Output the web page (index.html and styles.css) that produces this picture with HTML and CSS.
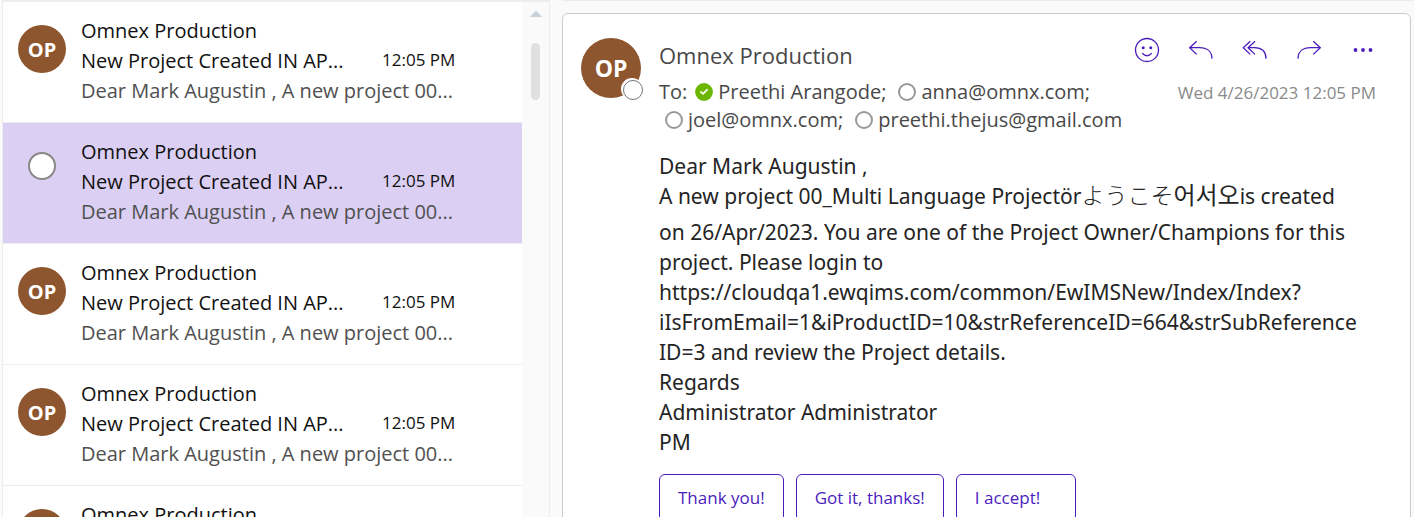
FILE: index.html
```html
<!DOCTYPE html>
<html lang="en">
<head>
<meta charset="utf-8">
<title>Mail</title>
<link rel="stylesheet" href="styles.css">
</head>
<body>
<main class="app">
  <section class="list-pane" aria-label="Messages">
    <ul class="messages">
      <li class="message">
        <span class="avatar">OP</span>
        <div class="summary">
          <span class="sender">Omnex Production</span>
          <span class="subject">New Project Created IN AP...</span><time class="time">12:05 PM</time>
          <span class="preview">Dear Mark Augustin , A new project 00...</span>
        </div>
      </li>
      <li class="message selected">
        <input class="pick" type="checkbox" aria-label="Select message">
        <div class="summary">
          <span class="sender">Omnex Production</span>
          <span class="subject">New Project Created IN AP...</span><time class="time">12:05 PM</time>
          <span class="preview">Dear Mark Augustin , A new project 00...</span>
        </div>
      </li>
      <li class="message">
        <span class="avatar">OP</span>
        <div class="summary">
          <span class="sender">Omnex Production</span>
          <span class="subject">New Project Created IN AP...</span><time class="time">12:05 PM</time>
          <span class="preview">Dear Mark Augustin , A new project 00...</span>
        </div>
      </li>
      <li class="message">
        <span class="avatar">OP</span>
        <div class="summary">
          <span class="sender">Omnex Production</span>
          <span class="subject">New Project Created IN AP...</span><time class="time">12:05 PM</time>
          <span class="preview">Dear Mark Augustin , A new project 00...</span>
        </div>
      </li>
      <li class="message">
        <span class="avatar">OP</span>
        <div class="summary">
          <span class="sender">Omnex Production</span>
        </div>
      </li>
    </ul>
    <div class="scrollbar">
      <svg width="12" height="6" viewBox="0 0 12 6"><path d="M0 6 L5 0.5 Q6 -0.3 7 0.5 L12 6Z" fill="#c8d0d5"/></svg>
      <div class="thumb"></div>
    </div>
  </section>
  <section class="reading-pane" aria-label="Message">
    <article class="card">
      <div class="avatar large">OP<span class="presence"></span></div>
      <div class="content">
        <header class="head">
          <div class="people">
            <h1 class="from">Omnex Production</h1>
            <div class="recipients">
              <div class="to-line"><span class="to">To:</span>
                <span class="person"><svg width="18" height="18" viewBox="0 0 19 19"><circle cx="9.500" cy="9.500" r="9.400" fill="#6bb700"/><path d="M6.200 9.300 L8.500 11.500 L12.800 7" fill="none" stroke="#fff" stroke-width="1.700" stroke-linecap="round" stroke-linejoin="round"/></svg>Preethi Arangode;</span>
                <span class="person"><span class="ring"></span>anna@omnx.com;</span></div>
              <div class="to-line second">
                <span class="person"><span class="ring"></span>joel@omnx.com;</span>
                <span class="person"><span class="ring"></span>preethi.thejus@gmail.com</span></div>
            </div>
          </div>
          <div class="side">
            <div class="actions">
              <button class="action" aria-label="React"><svg viewBox="0 0 26 26"><circle cx="13" cy="13" r="11.500"/><circle class="dot" cx="9.200" cy="10.800" r="1.500"/><circle class="dot" cx="16.800" cy="10.800" r="1.500"/><path d="M8.300 16.300 Q13 21.200 17.700 16.300"/></svg></button>
              <button class="action" aria-label="Reply"><svg viewBox="0 0 26 26"><path d="M8.700 4.200 L1.700 10.700 L8.700 17.400 M1.700 10.700 H11.500 C19 10.700 23.900 14.500 24 21.700"/></svg></button>
              <button class="action" aria-label="Reply all"><svg viewBox="0 0 26 26"><path d="M8.300 4.200 L1.300 10.700 L8.300 17.400 M13 4.200 L6 10.700 L13 17.400 M6 10.700 H12.500 C19.500 10.700 23.900 14.500 24 21.700"/></svg></button>
              <button class="action" aria-label="Forward"><svg viewBox="0 0 26 26"><path d="M17.300 4.200 L24.300 10.700 L17.300 17.400 M24.300 10.700 H14.500 C7 10.700 2.100 14.500 2 21.700"/></svg></button>
              <button class="action" aria-label="More"><svg viewBox="0 0 26 26"><circle class="dot" cx="5.500" cy="13" r="1.900"/><circle class="dot" cx="13" cy="13" r="1.900"/><circle class="dot" cx="20.500" cy="13" r="1.900"/></svg></button>
            </div>
            <time class="date">Wed 4/26/2023 12:05 PM</time>
          </div>
        </header>
        <div class="body">
          <p>Dear Mark Augustin ,</p>
          <p class="multi">A new project 00_Multi Language Projectör<span class="ja" lang="ja">ようこそ</span><span class="ko" lang="ko">어서오</span>is created</p>
          <p>on 26/Apr/2023. You are one of the Project Owner/Champions for this<br>project. Please login to<br>https://cloudqa1.ewqims.com/common/EwIMSNew/Index/Index?<br>iIsFromEmail=1&amp;iProductID=10&amp;strReferenceID=664&amp;strSubReference<br>ID=3 and review the Project details.</p>
          <p>Regards</p>
          <p>Administrator Administrator</p>
          <p>PM</p>
        </div>
        <div class="replies">
          <button class="reply">Thank you!</button>
          <button class="reply">Got it, thanks!</button>
          <button class="reply short">I accept!</button>
        </div>
      </div>
    </article>
  </section>
</main>
</body>
</html>
```
FILE: styles.css
```css
* { box-sizing: border-box; }
body {
  margin: 0;
  background: #fafafa;
  color: #111;
  font-family: "Open Sans", "Noto Sans", sans-serif;
  font-size: 20px;
}
p, h1, ul { margin: 0; padding: 0; }
button { font-family: inherit; }
.app { display: flex; height: 100vh; overflow: hidden; }
.list-pane {
  display: flex;
  flex: 0 0 548px;
  margin-left: 2px;
  border: 1px solid #ededed;
  border-top-width: 2px;
  border-bottom: 0;
}
.messages { flex: 1; overflow: hidden; list-style: none; background: #fff; }
.message {
  display: flex;
  padding: 14px 0 16px 15px;
  border-bottom: 1px solid #ededed;
}
.message.selected { background: #dbcff3; }
.avatar {
  display: flex;
  align-items: center;
  justify-content: center;
  flex: none;
  width: 48px;
  height: 48px;
  margin: 9px 15px 0 0;
  border-radius: 50%;
  background: #8e562e;
  color: #fff;
  font-size: 20px;
  font-weight: 700;
}
.pick {
  appearance: none;
  flex: none;
  width: 28px;
  height: 28px;
  margin: 15px 25px 0 10px;
  border: 2px solid #8a8886;
  border-radius: 50%;
  background: #fff;
}
.summary {
  display: grid;
  grid-template-columns: 301px auto;
  justify-content: start;
  line-height: 30px;
  white-space: nowrap;
}
.sender, .preview { grid-column: 1 / -1; }
.preview { color: #505050; }
.time { font-size: 17px; line-height: 28px; }
.scrollbar {
  display: flex;
  flex-direction: column;
  align-items: center;
  flex: 0 0 27px;
  gap: 26px;
  padding-top: 9px;
}
.thumb { width: 9px; height: 57px; border-radius: 5px; background: #e0e0e0; }
.reading-pane {
  flex: 1;
  min-width: 0;
  margin-left: 12px;
  padding: 12px 3px 0 0;
  border-top: 1px solid #ededed;
}
.card {
  display: flex;
  height: 100vh;
  padding: 23px 34px 0 18px;
  border: 1px solid #ccc;
  border-radius: 6px;
  background: #fff;
}
.avatar.large {
  position: relative;
  width: 60px;
  height: 60px;
  margin: 1px 18px 0 0;
  font-size: 23px;
}
.presence {
  position: absolute;
  right: -2px;
  bottom: -2px;
  width: 22px;
  height: 22px;
  border: 2px solid #fff;
  border-radius: 50%;
  background: #fff;
}
.presence::before {
  content: "";
  display: block;
  width: 18px;
  height: 18px;
  border: 1px solid #777;
  border-radius: 50%;
}
.content { flex: 1; min-width: 0; }
.head { display: flex; justify-content: space-between; }
.people { color: #484848; white-space: nowrap; }
.from { padding-top: 2px; font-size: 22px; font-weight: 400; line-height: 32px; }
.recipients { padding-top: 7px; line-height: 28px; }
.to-line { display: flex; gap: 12px; }
.to { margin-right: -4px; }
.second { padding-left: 6px; }
.person { display: flex; align-items: center; gap: 5px; }
.ring { width: 18px; height: 18px; border: 2px solid #999; border-radius: 50%; }
.side {
  display: flex;
  flex-direction: column;
  align-items: flex-end;
  gap: 18px;
  flex: none;
  width: 0;
}
.actions { display: flex; gap: 28px; }
.action {
  display: flex;
  width: 26px;
  height: 26px;
  padding: 0;
  border: 0;
  background: none;
}
.action svg { width: 26px; height: 26px; fill: none; stroke: #4b1cbe; stroke-width: 1.3; }
.action .dot { fill: #4b1cbe; stroke: none; }
.date { color: #8a8a8a; font-size: 17px; line-height: 24px; white-space: nowrap; }
.body {
  padding-top: 17px;
  color: #242424;
  font-family: "Noto Sans", "Open Sans", sans-serif;
  font-size: 21px;
  line-height: 30px;
  white-space: nowrap;
}
.multi { height: 36px; line-height: 31px; }
.ja { font-family: "Noto Sans CJK JP", sans-serif; font-size: 23px; font-weight: 300; line-height: 1; }
.ko { font-family: "Noto Sans CJK KR", sans-serif; font-size: 24px; font-weight: 400; line-height: 1; }
.replies { display: flex; gap: 12px; padding-top: 17px; }
.reply {
  height: 48px;
  padding: 0 18px 2px;
  border: 1px solid #4b1cbe;
  border-radius: 6px;
  background: #fff;
  color: #4b1cbe;
  font-size: 17px;
}
.short { min-width: 120px; text-align: left; }
```
